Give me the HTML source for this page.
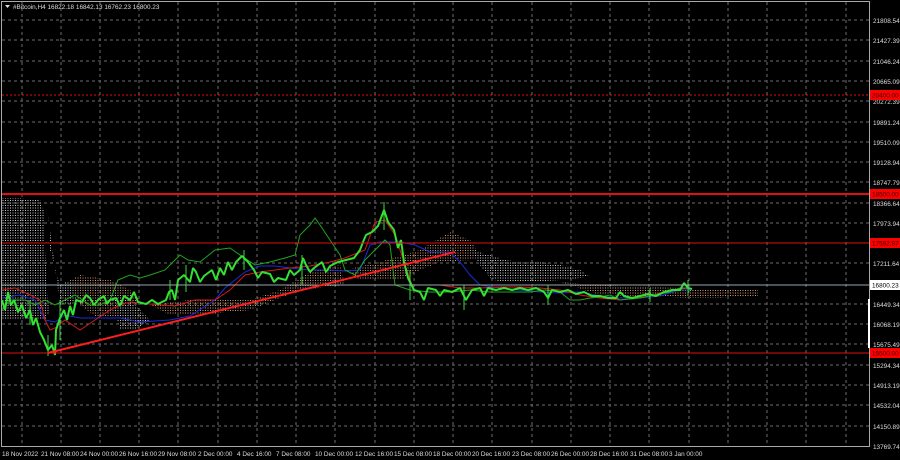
<!DOCTYPE html>
<html><head><meta charset="utf-8"><style>
html,body{margin:0;padding:0;background:#000;width:900px;height:460px;overflow:hidden}
svg{display:block}
text{font-family:"Liberation Sans",sans-serif;font-size:6.4px;fill:#ddd}
</style></head><body>
<svg width="900" height="460" viewBox="0 0 900 460" xmlns="http://www.w3.org/2000/svg">
<defs>
<pattern id="pg" width="2.5" height="2.5" patternUnits="userSpaceOnUse"><rect width="1" height="1" fill="#c8c8c8"/></pattern>
<pattern id="pb" width="2.5" height="2.5" patternUnits="userSpaceOnUse"><rect width="1" height="1" fill="#d09870"/></pattern>
</defs>
<rect width="900" height="460" fill="#000"/>
<g stroke="#6b6b6b" stroke-width="1" stroke-dasharray="3,3">
<line x1="22" y1="2" x2="22" y2="446"/><line x1="61" y1="2" x2="61" y2="446"/><line x1="100" y1="2" x2="100" y2="446"/><line x1="139" y1="2" x2="139" y2="446"/><line x1="178" y1="2" x2="178" y2="446"/><line x1="218" y1="2" x2="218" y2="446"/><line x1="257" y1="2" x2="257" y2="446"/><line x1="296" y1="2" x2="296" y2="446"/><line x1="335" y1="2" x2="335" y2="446"/><line x1="375" y1="2" x2="375" y2="446"/><line x1="414" y1="2" x2="414" y2="446"/><line x1="453" y1="2" x2="453" y2="446"/><line x1="492" y1="2" x2="492" y2="446"/><line x1="532" y1="2" x2="532" y2="446"/><line x1="571" y1="2" x2="571" y2="446"/><line x1="610" y1="2" x2="610" y2="446"/><line x1="649" y1="2" x2="649" y2="446"/><line x1="689" y1="2" x2="689" y2="446"/><line x1="728" y1="2" x2="728" y2="446"/><line x1="767" y1="2" x2="767" y2="446"/><line x1="806" y1="2" x2="806" y2="446"/><line x1="846" y1="2" x2="846" y2="446"/>
<line x1="2" y1="20" x2="869" y2="20"/><line x1="2" y1="40" x2="869" y2="40"/><line x1="2" y1="61" x2="869" y2="61"/><line x1="2" y1="81" x2="869" y2="81"/><line x1="2" y1="101" x2="869" y2="101"/><line x1="2" y1="122" x2="869" y2="122"/><line x1="2" y1="142" x2="869" y2="142"/><line x1="2" y1="162" x2="869" y2="162"/><line x1="2" y1="182" x2="869" y2="182"/><line x1="2" y1="203" x2="869" y2="203"/><line x1="2" y1="223" x2="869" y2="223"/><line x1="2" y1="263" x2="869" y2="263"/><line x1="2" y1="304" x2="869" y2="304"/><line x1="2" y1="324" x2="869" y2="324"/><line x1="2" y1="344" x2="869" y2="344"/><line x1="2" y1="365" x2="869" y2="365"/><line x1="2" y1="385" x2="869" y2="385"/><line x1="2" y1="405" x2="869" y2="405"/><line x1="2" y1="426" x2="869" y2="426"/>
</g>
<rect x="1.5" y="1.5" width="868" height="445" fill="none" stroke="#aaa" stroke-width="1"/>
<polygon fill="url(#pg)" points="2,198 20,198 40,200 45,215 45,250 48,300 50,310 45,320 2,320"/>
<polygon fill="url(#pg)" points="48,215 50,250 60,285 70,280 75,290 80,300 70,305 60,305"/>
<polygon fill="url(#pb)" points="70,280 80,275 110,280 130,290 140,300 120,315 100,320 80,305"/>
<polygon fill="url(#pg)" points="110,290 130,300 150,320 135,330 120,330"/>
<polygon fill="url(#pb)" points="150,305 190,300 220,300 250,300 280,290 310,272 340,265 345,285 300,290 250,310 200,315 170,315"/>
<polygon fill="url(#pb)" points="345,270 380,262 420,250 450,232 470,240 480,255 470,260 440,262 420,270 400,280 360,280"/>
<polygon fill="url(#pg)" points="470,250 490,255 505,260 520,262 540,262 560,265 580,270 590,277 560,280 530,282 500,282 490,278 480,265"/>
<polygon fill="url(#pb)" points="560,282 600,285 640,287 680,288 720,290 758,290 758,296 720,298 680,298 640,296 600,295"/>
<polyline fill="none" stroke="#1b2bd6" stroke-width="1" points="2,298 20,295 35,300 40,310 45,320 55,322 65,315 80,318 100,318 120,318 140,322 170,320 190,316 215,300 225,288 245,272 260,266 275,266 290,268 310,270 330,270 345,271 360,270 370,245 380,242 400,242 415,245 430,252 450,252 460,262 470,275 480,285 500,288 520,290 540,292 560,293 580,292 600,296 620,298 640,298 660,296 680,290 690,290"/>
<polyline fill="none" stroke="#d41818" stroke-width="1" points="2,290 15,288 30,295 40,300 45,320 50,330 55,328 65,320 80,330 95,320 110,310 120,305 130,302 150,304 175,306 195,300 215,300 230,290 245,275 260,272 275,270 290,268 310,266 330,262 345,258 365,250 375,222 385,220 395,235 400,250 405,265 412,285 420,285 440,285 460,288 480,288 500,287 520,287 540,288 560,290 580,295 600,298 620,300 650,296 670,290 690,288"/>
<polyline fill="none" stroke="#1fa51f" stroke-width="1" points="2,310 10,300 25,300 35,305 45,300 55,305 65,300 75,295 90,305 100,305 110,300 118,280 130,275 140,278 150,275 165,270 180,255 188,260 200,262 215,250 230,248 240,255 255,265 270,262 285,258 295,255 300,235 305,230 310,225 315,218 320,225 330,240 340,255 345,270 355,275 365,260 375,250 385,240 390,245 395,285 410,290 430,292 450,292 470,290 490,292 510,292 530,292 545,290 560,292 570,300 580,300 590,298 600,297 610,295 620,300 640,298 655,295 670,292 680,288 690,288"/>
<polyline fill="none" stroke="#33e033" stroke-width="2" stroke-linejoin="bevel" points="2,300 5,310 8,292 11,305 14,300 18,312 22,305 26,318 30,310 33,325 36,318 40,332 44,340 48,350 52,345 55,355 56,330 60,318 64,310 67,320 70,306 73,315 76,300 82,302 86,295 90,298 94,305 98,300 104,296 107,304 110,300 116,298 120,306 124,296 130,300 134,292 138,302 146,304 152,300 158,304 166,300 169,292 172,290 175,300 178,280 184,275 190,282 193,268 196,272 200,282 204,276 212,270 216,280 220,268 224,275 228,262 232,270 236,262 242,256 248,262 254,270 258,278 262,272 270,274 274,282 278,278 286,280 290,270 294,275 300,270 303,258 306,265 310,272 314,268 322,262 326,272 330,266 338,262 346,260 354,258 360,250 363,242 366,235 372,232 378,226 381,218 384,210 388,222 394,230 398,248 401,240 404,262 408,278 414,290 420,292 424,300 428,288 436,290 440,296 444,290 452,292 460,288 466,300 472,290 480,288 484,296 488,288 496,290 504,288 512,290 520,288 528,290 536,288 544,292 548,298 552,290 560,292 568,290 576,294 584,292 592,296 600,296 608,298 616,298 620,292 624,296 632,298 640,296 648,294 656,296 664,292 672,290 680,290 684,283 688,288 692,289"/>
<g stroke="#33e033" stroke-width="1">
<line x1="48" y1="335" x2="48" y2="356"/><line x1="60" y1="300" x2="60" y2="340"/><line x1="186" y1="265" x2="186" y2="292"/><line x1="244" y1="250" x2="244" y2="270"/><line x1="384" y1="202" x2="384" y2="230"/><line x1="464" y1="285" x2="464" y2="310"/><line x1="688" y1="280" x2="688" y2="295"/><line x1="650" y1="288" x2="650" y2="302"/><line x1="302" y1="255" x2="302" y2="285"/><line x1="30" y1="300" x2="30" y2="325"/><line x1="170" y1="280" x2="170" y2="300"/><line x1="410" y1="270" x2="410" y2="300"/><line x1="548" y1="285" x2="548" y2="305"/>
</g>
<g stroke="#e01010">
<line x1="2" y1="95" x2="869" y2="95" stroke-dasharray="2,2" stroke-width="1"/>
<line x1="2" y1="194" x2="869" y2="194" stroke-width="2"/>
<line x1="2" y1="243" x2="869" y2="243" stroke-width="1"/>
<line x1="2" y1="353" x2="869" y2="353" stroke-width="1"/>
</g>
<line x1="2" y1="285" x2="869" y2="285" stroke="#9aa3b0" stroke-width="1"/>
<line x1="48" y1="353" x2="455" y2="252" stroke="#ff1e1e" stroke-width="2"/>
<polygon points="5,5 10,5 7.5,8" fill="#ddd"/>
<text x="13" y="9">#Bitcoin,H4  16822.18 16842.13 16762.23 16800.23</text>
<g>
<text x="873" y="23">21808.54</text><text x="873" y="43">21427.39</text><text x="873" y="64">21046.24</text><text x="873" y="84">20665.09</text><text x="873" y="104">20272.39</text><text x="873" y="125">19891.24</text><text x="873" y="145">19510.09</text><text x="873" y="165">19128.94</text><text x="873" y="185">18747.79</text><text x="873" y="206">18366.64</text><text x="873" y="226">17973.94</text><text x="873" y="266">17211.64</text><text x="873" y="307">16449.34</text><text x="873" y="327">16068.19</text><text x="873" y="347">15675.49</text><text x="873" y="368">15294.34</text><text x="873" y="388">14913.19</text><text x="873" y="408">14532.04</text><text x="873" y="429">14150.89</text><text x="873" y="449">13769.74</text>
</g>
<rect x="870" y="90" width="30" height="10" fill="#f00"/><text x="872" y="97.5" style="fill:#300">20400.00</text>
<rect x="870" y="189" width="30" height="10" fill="#f00"/><text x="872" y="196.5" style="fill:#300">18500.00</text>
<rect x="870" y="238" width="30" height="10" fill="#f00"/><text x="872" y="245.5" style="fill:#300">17592.97</text>
<rect x="870" y="280" width="30" height="10" fill="#fff"/><text x="872" y="287.5" style="fill:#000">16800.23</text>
<rect x="870" y="348" width="30" height="10" fill="#f00"/><text x="872" y="355.5" style="fill:#300">15500.00</text>
<rect x="868" y="299" width="2" height="49" fill="#fff"/>
<g style="font-size:6px">
<text x="2" y="456">18 Nov 2022</text><text x="41" y="456">21 Nov 08:00</text><text x="80" y="456">24 Nov 00:00</text><text x="119" y="456">26 Nov 16:00</text><text x="158" y="456">29 Nov 08:00</text><text x="198" y="456">2 Dec 00:00</text><text x="237" y="456">4 Dec 16:00</text><text x="276" y="456">7 Dec 08:00</text><text x="315" y="456">10 Dec 00:00</text><text x="355" y="456">12 Dec 16:00</text><text x="394" y="456">15 Dec 08:00</text><text x="433" y="456">18 Dec 00:00</text><text x="472" y="456">20 Dec 16:00</text><text x="512" y="456">23 Dec 08:00</text><text x="551" y="456">26 Dec 00:00</text><text x="590" y="456">28 Dec 16:00</text><text x="630" y="456">31 Dec 08:00</text><text x="669" y="456">3 Jan 00:00</text>
</g>
</svg>
</body></html>
